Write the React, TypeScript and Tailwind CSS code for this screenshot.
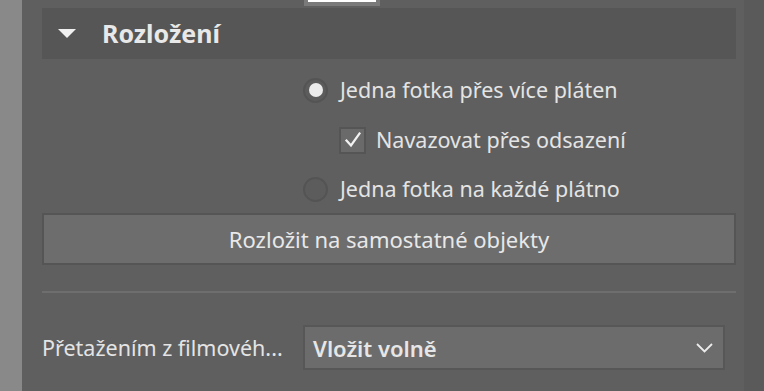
import { useState } from 'react'

function Radio({ checked }: { checked: boolean }) {
  return (
    <span className="flex h-[25px] w-[25px] shrink-0 items-center justify-center rounded-full border-2 border-[#545454] bg-[#5c5c5c]">
      {checked && <span className="h-[14px] w-[14px] rounded-full bg-[#ececec]" />}
    </span>
  )
}

function Checkbox({ checked }: { checked: boolean }) {
  return (
    <span className="flex h-[27px] w-[27px] shrink-0 items-center justify-center border-2 border-[#555555] bg-[#6a6a6a]">
      {checked && (
        <svg width="18" height="18" viewBox="0 0 18 18" fill="none">
          <path d="M2.5 9.5 L7 14.5 L15.5 2.5" stroke="#f2f2f2" strokeWidth="2.2" strokeLinecap="square" />
        </svg>
      )}
    </span>
  )
}

export default function App() {
  const [mode, setMode] = useState<'multi' | 'each'>('multi')
  const [chain, setChain] = useState(true)

  return (
    <div className="flex h-[391px] w-[764px] overflow-hidden text-[#e4e4e4]" style={{ fontFamily: '"Noto Sans", "Open Sans", sans-serif' }}>
      <div className="w-[22px] shrink-0 bg-[#898989]" />

      <div className="flex w-[722px] shrink-0 flex-col bg-[#5f5f5f] pl-[20px] pr-[8px]">
        {/* clipped row from above */}
        <div className="h-[8px] overflow-hidden">
          <div className="ml-[262px] h-[6px] w-[76px] border-x-4 border-b-4 border-[#7a7a7a] bg-white" />
        </div>

        {/* section header */}
        <div className="flex h-[51px] items-center gap-[26px] bg-[#565656] pl-[16px]">
          <svg width="18" height="9" viewBox="0 0 18 9">
            <path d="M0 0 H18 L9 9 Z" fill="#f0f0f0" />
          </svg>
          <span className="text-[25px] font-bold leading-none text-[#e8e8e8]">Rozložení</span>
        </div>

        <div className="mt-[6px] flex flex-col pl-[261px] text-[21.5px] leading-none">
          <button className="flex h-[50px] items-center gap-[12px] text-left" onClick={() => setMode('multi')}>
            <Radio checked={mode === 'multi'} />
            <span>Jedna fotka přes více pláten</span>
          </button>
          <button className="flex h-[50px] items-center gap-[10px] pl-[36px] text-left" onClick={() => setChain(!chain)}>
            <Checkbox checked={chain} />
            <span>Navazovat přes odsazení</span>
          </button>
          <button className="flex h-[48px] items-center gap-[12px] text-left" onClick={() => setMode('each')}>
            <Radio checked={mode === 'each'} />
            <span>Jedna fotka na každé plátno</span>
          </button>
        </div>

        <button className="h-[52px] w-full border-2 border-[#555555] bg-[#6d6d6d] text-[22px] leading-none text-[#e8e8e8]">
          Rozložit na samostatné objekty
        </button>

        <div className="mt-[26px] h-[2px] w-full bg-[#6e6e6e]" />

        <div className="mt-[32px] flex items-center">
          <span className="w-[261px] shrink-0 whitespace-nowrap text-[21.5px] leading-none">Přetažením z filmovéh...</span>
          <div className="flex h-[45px] w-[422px] items-center justify-between border-2 border-[#575757] bg-[#6c6c6c] pl-[8px] pr-[10px]">
            <span className="text-[22px] font-semibold leading-none text-[#e6e6e6]">Vložit volně</span>
            <svg width="17" height="10" viewBox="0 0 17 10" fill="none">
              <path d="M1 1 L8.5 8.5 L16 1" stroke="#ececec" strokeWidth="1.8" />
            </svg>
          </div>
        </div>
      </div>

      <div className="flex-1 bg-[#5a5a5a]" />
    </div>
  )
}
